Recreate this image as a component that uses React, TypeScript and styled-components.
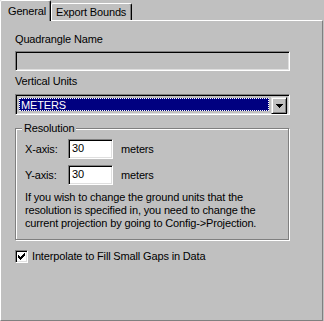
import styled, { createGlobalStyle } from "styled-components";

const GlobalStyle = createGlobalStyle`
  html, body {
    margin: 0;
    padding: 0;
    background: #c0c0c0;
  }
  body {
    font-family: "Liberation Sans", Arial, sans-serif;
    font-size: 11px;
    letter-spacing: -0.15px;
    color: #000;
  }
`;

const Window = styled.div`
  width: 324px;
  height: 321px;
  background: #c0c0c0;
  overflow: hidden;
`;

const TabStrip = styled.div`
  display: flex;
  align-items: flex-end;
  height: 20px;
`;

const Tab = styled.div<{ $active?: boolean; $width: number; $pad: number }>`
  position: relative;
  z-index: ${(p) => (p.$active ? 1 : 0)};
  box-sizing: border-box;
  width: ${(p) => p.$width}px;
  height: ${(p) => (p.$active ? 21 : 17)}px;
  margin-bottom: ${(p) => (p.$active ? -1 : 0)}px;
  padding-left: ${(p) => p.$pad}px;
  display: flex;
  align-items: center;
  background: #c0c0c0;
  border-top: 1px solid #fff;
  border-left: 1px solid #fff;
  border-right: 1px solid #000;
  border-radius: 2px 2px 0 0;
  box-shadow: inset -1px 0 #808080;
  white-space: nowrap;
`;

const Panel = styled.div`
  box-sizing: border-box;
  width: 323px;
  height: 301px;
  padding: 12px 14px 0 14px;
  border-top: 1px solid #fff;
  border-left: 1px solid #fff;
  border-right: 1px solid #808080;
  border-bottom: 1px solid #808080;
  display: flex;
  flex-direction: column;
`;

const FieldLabel = styled.div<{ $gap: number }>`
  line-height: 13px;
  height: 13px;
  margin-bottom: ${(p) => p.$gap}px;
  white-space: nowrap;
`;

const Sunken = styled.div<{ $bg?: string }>`
  box-sizing: border-box;
  background: ${(p) => p.$bg ?? "#c0c0c0"};
  border-top: 1px solid #808080;
  border-left: 1px solid #808080;
  border-right: 1px solid #fff;
  border-bottom: 1px solid #fff;
  box-shadow: inset 1px 1px #000, inset -1px -1px #dfdfdf;
`;

const NameBox = styled(Sunken)`
  width: 275px;
  height: 20px;
  margin-bottom: 4px;
`;

const Combo = styled(Sunken)`
  width: 275px;
  height: 21px;
  padding: 2px;
  display: flex;
  gap: 1px;
`;

const ComboValue = styled.div`
  flex: 1;
  display: flex;
  padding: 1px;
`;

const Highlight = styled.div`
  flex: 1;
  box-sizing: border-box;
  background: #000080;
  color: #fff;
  border: 1px dotted #fff;
  padding-left: 1px;
  line-height: 13px;
`;

const DropButton = styled.div`
  box-sizing: border-box;
  width: 16px;
  height: 17px;
  background: #c0c0c0;
  border-top: 1px solid #dfdfdf;
  border-left: 1px solid #dfdfdf;
  border-right: 1px solid #000;
  border-bottom: 1px solid #000;
  box-shadow: inset 1px 1px #fff, inset -1px -1px #808080;
  display: flex;
  align-items: center;
  justify-content: center;
`;

const Group = styled.div`
  position: relative;
  box-sizing: border-box;
  width: 274px;
  height: 112px;
  margin-top: 13px;
  padding: 10px 8px 0 9px;
  border: 1px solid #808080;
  box-shadow: inset 1px 1px #fff, 1px 1px #fff;
`;

const Caption = styled.div`
  position: absolute;
  top: -7px;
  left: 6px;
  padding: 0 2px;
  line-height: 13px;
  background: #c0c0c0;
`;

const AxisRow = styled.div`
  display: flex;
  align-items: center;
  height: 20px;
  margin-bottom: 6px;
`;

const AxisLabel = styled.div`
  width: 43px;
`;

const NumberBox = styled(Sunken)`
  width: 45px;
  height: 20px;
  padding-left: 3px;
  line-height: 16px;
  margin-right: 8px;
`;

const Note = styled.p`
  margin: 5px 0 0 0;
  line-height: 13px;
  white-space: nowrap;
`;

const CheckRow = styled.div`
  display: flex;
  align-items: center;
  gap: 4px;
  margin-top: 10px;
  line-height: 13px;
`;

const CheckBox = styled(Sunken)`
  width: 13px;
  height: 13px;
  display: flex;
  align-items: center;
  justify-content: center;
`;

export default function App() {
  return (
    <Window>
      <GlobalStyle />
      <TabStrip>
        <Tab $active $width={51} $pad={7}>
          General
        </Tab>
        <Tab $width={81} $pad={4}>
          Export Bounds
        </Tab>
      </TabStrip>
      <Panel>
        <FieldLabel $gap={5}>Quadrangle Name</FieldLabel>
        <NameBox />
        <FieldLabel $gap={6}>Vertical Units</FieldLabel>
        <Combo>
          <ComboValue>
            <Highlight>METERS</Highlight>
          </ComboValue>
          <DropButton>
            <svg width="7" height="4" viewBox="0 0 7 4">
              <path d="M0 0h7v1H0zM1 1h5v1H1zM2 2h3v1H2zM3 3h1v1H3z" fill="#000" />
            </svg>
          </DropButton>
        </Combo>
        <Group>
          <Caption>Resolution</Caption>
          <AxisRow>
            <AxisLabel>X-axis:</AxisLabel>
            <NumberBox $bg="#fff">30</NumberBox>
            <span>meters</span>
          </AxisRow>
          <AxisRow>
            <AxisLabel>Y-axis:</AxisLabel>
            <NumberBox $bg="#fff">30</NumberBox>
            <span>meters</span>
          </AxisRow>
          <Note>
            If you wish to change the ground units that the
            <br />
            resolution is specified in, you need to change the
            <br />
            current projection by going to Config-&gt;Projection.
          </Note>
        </Group>
        <CheckRow>
          <CheckBox $bg="#fff">
            <svg width="7" height="7" viewBox="0 0 7 7">
              <path
                d="M6 0h1v3H6zM5 1h1v3H5zM4 2h1v3H4zM3 3h1v3H3zM2 4h1v3H2zM1 3h1v3H1zM0 2h1v3H0z"
                fill="#000"
              />
            </svg>
          </CheckBox>
          <span>Interpolate to Fill Small Gaps in Data</span>
        </CheckRow>
      </Panel>
    </Window>
  );
}
